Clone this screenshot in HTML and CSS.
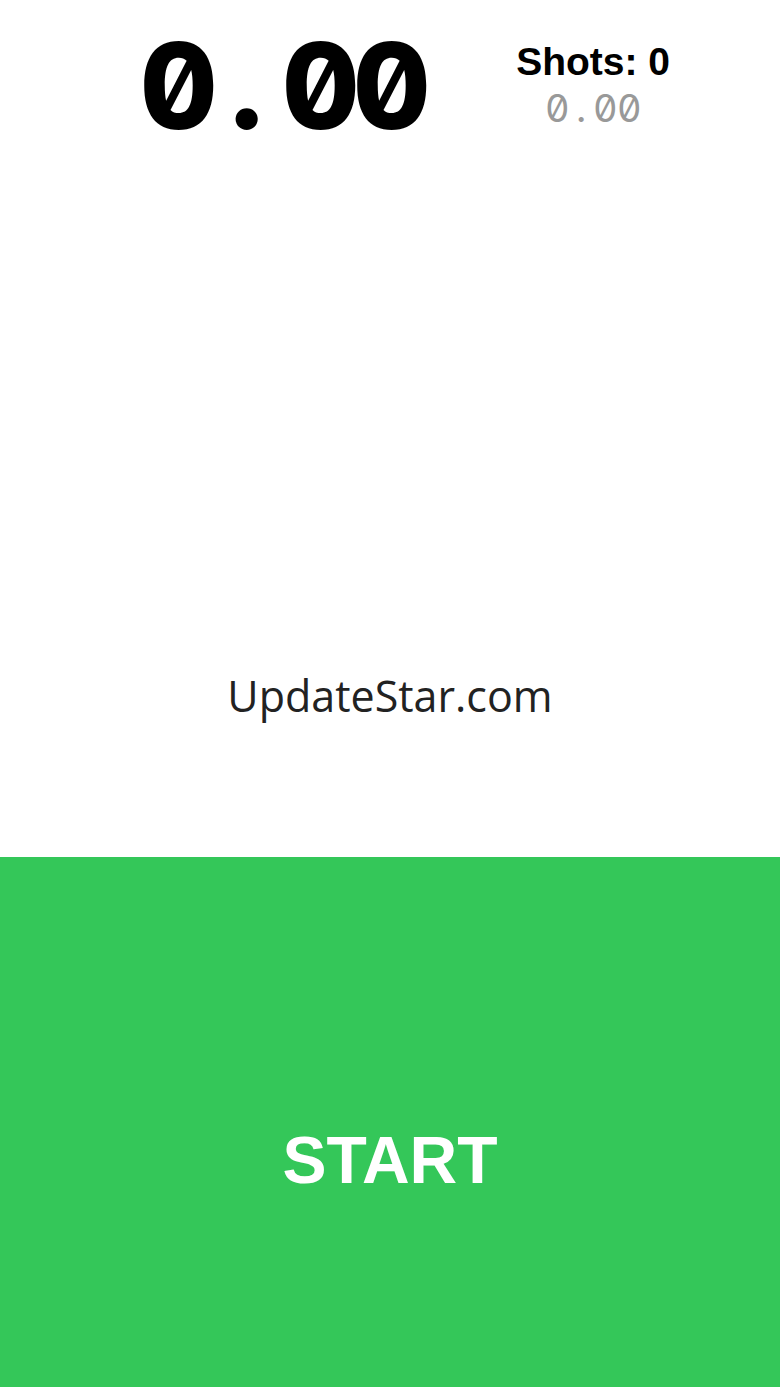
FILE: index.html
```html
<!DOCTYPE html>
<html>
<head>
<meta charset="utf-8">
<link rel="stylesheet" href="styles.css">
</head>
<body>
<div class="screen">
  <div class="top">
    <div class="timer"><span class="ch">0</span><span class="ch">.</span><span class="ch">0</span><span class="ch">0</span></div>
    <div class="stats">
      <div class="shots">Shots: 0</div>
      <div class="split"><span class="ch">0</span><span class="ch">.</span><span class="ch">0</span><span class="ch">0</span></div>
    </div>
  </div>
  <div class="middle">
    <div class="brand">UpdateStar.com</div>
  </div>
  <div class="start">START</div>
</div>
</body>
</html>
```
FILE: styles.css
```css
html, body {
  margin: 0;
  padding: 0;
  background: #fff;
}
.screen {
  width: 780px;
  height: 1387px;
  display: flex;
  flex-direction: column;
  overflow: hidden;
}
.top {
  display: flex;
  align-items: flex-start;
  height: 140px;
}
.timer {
  display: flex;
  font-family: Inter, sans-serif;
  font-feature-settings: "zero" 1, "tnum" 1;
  font-weight: 800;
  font-size: 120px;
  line-height: 1;
  color: #000;
  margin-left: 140px;
  margin-top: 26px;
}
.timer .ch {
  width: 71px;
  text-align: center;
}
.stats {
  margin-left: auto;
  margin-right: 110px;
  display: flex;
  flex-direction: column;
  align-items: center;
  margin-top: 42px;
}
.shots {
  font-family: "Liberation Sans", Arial, sans-serif;
  font-weight: bold;
  font-size: 39px;
  line-height: 1;
  color: #000;
}
.split {
  display: flex;
  font-family: Inter, sans-serif;
  font-feature-settings: "zero" 1, "tnum" 1;
  font-weight: 400;
  font-size: 38px;
  line-height: 1;
  color: #999;
  margin-top: 8px;
}
.split .ch {
  width: 24px;
  text-align: center;
}
.middle {
  flex: 1;
  display: flex;
  justify-content: center;
  align-items: flex-end;
  padding-bottom: 140px;
}
.brand {
  font-family: "Open Sans", sans-serif;
  font-size: 43px;
  line-height: 1;
  color: #222;
}
.start {
  height: 530px;
  background: #34c759;
  color: #fff;
  font-family: "Liberation Sans", Arial, sans-serif;
  font-weight: bold;
  font-size: 66px;
  display: flex;
  justify-content: center;
  align-items: center;
  padding-top: 76px;
  box-sizing: border-box;
}
```
